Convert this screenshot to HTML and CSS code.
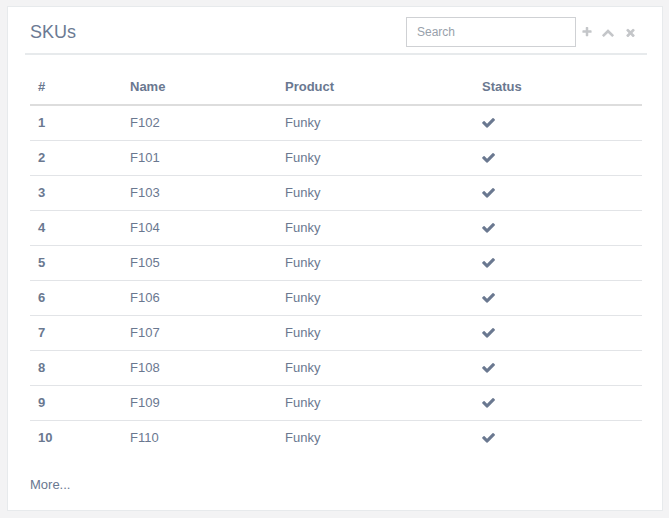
FILE: index.html
```html
<!DOCTYPE html>
<html>
<head>
<meta charset="utf-8">
<link rel="stylesheet" href="styles.css">
</head>
<body>
<div class="panel">
  <div class="panel-head">
    <h5 class="title">SKUs</h5>
    <div class="tools">
      <input class="search" type="text" placeholder="Search">
      <svg class="ic ic-plus" viewBox="128 128 1536 1536"><path d="M1600 736v192q0 40-28 68t-68 28h-416v416q0 40-28 68t-68 28h-192q-40 0-68-28t-28-68v-416h-416q-40 0-68-28t-28-68v-192q0-40 28-68t68-28h416v-416q0-40 28-68t68-28h192q40 0 68 28t28 68v416h416q40 0 68 28t28 68z"/></svg>
      <svg class="ic ic-up" viewBox="90 440 1612 1080"><path d="M1683 1331l-166 165q-19 19-45 19t-45-19l-531-531-531 531q-19 19-45 19t-45-19l-166-165q-19-19-19-45.5t19-45.5l742-741q19-19 45-19t45 19l742 741q19 19 19 45.5t-19 45.5z"/></svg>
      <svg class="ic ic-x" viewBox="290 270 1210 1270"><path d="M1490 1322q0 40-28 68l-136 136q-28 28-68 28t-68-28l-294-294-294 294q-28 28-68 28t-68-28l-136-136q-28-28-28-68t28-68l294-294-294-294q-28-28-28-68t28-68l136-136q28-28 68-28t68 28l294 294 294-294q28-28 68-28t68 28l136 136q28 28 28 68t-28 68l-294 294 294 294q28 28 28 68z"/></svg>
    </div>
  </div>
  <div class="panel-body">
    <table class="grid">
      <thead>
        <tr><th class="c1">#</th><th class="c2">Name</th><th class="c3">Product</th><th>Status</th></tr>
      </thead>
      <tbody>
        <tr><td class="num">1</td><td>F102</td><td>Funky</td><td><svg class="chk" viewBox="100 380 1580 1120"><path d="M1671 566q0 40-28 68l-724 724-136 136q-28 28-68 28t-68-28l-136-136-362-362q-28-28-28-68t28-68l136-136q28-28 68-28t68 28l294 295 656-657q28-28 68-28t68 28l136 136q28 28 28 68z"/></svg></td></tr>
        <tr><td class="num">2</td><td>F101</td><td>Funky</td><td><svg class="chk" viewBox="100 380 1580 1120"><path d="M1671 566q0 40-28 68l-724 724-136 136q-28 28-68 28t-68-28l-136-136-362-362q-28-28-28-68t28-68l136-136q28-28 68-28t68 28l294 295 656-657q28-28 68-28t68 28l136 136q28 28 28 68z"/></svg></td></tr>
        <tr><td class="num">3</td><td>F103</td><td>Funky</td><td><svg class="chk" viewBox="100 380 1580 1120"><path d="M1671 566q0 40-28 68l-724 724-136 136q-28 28-68 28t-68-28l-136-136-362-362q-28-28-28-68t28-68l136-136q28-28 68-28t68 28l294 295 656-657q28-28 68-28t68 28l136 136q28 28 28 68z"/></svg></td></tr>
        <tr><td class="num">4</td><td>F104</td><td>Funky</td><td><svg class="chk" viewBox="100 380 1580 1120"><path d="M1671 566q0 40-28 68l-724 724-136 136q-28 28-68 28t-68-28l-136-136-362-362q-28-28-28-68t28-68l136-136q28-28 68-28t68 28l294 295 656-657q28-28 68-28t68 28l136 136q28 28 28 68z"/></svg></td></tr>
        <tr><td class="num">5</td><td>F105</td><td>Funky</td><td><svg class="chk" viewBox="100 380 1580 1120"><path d="M1671 566q0 40-28 68l-724 724-136 136q-28 28-68 28t-68-28l-136-136-362-362q-28-28-28-68t28-68l136-136q28-28 68-28t68 28l294 295 656-657q28-28 68-28t68 28l136 136q28 28 28 68z"/></svg></td></tr>
        <tr><td class="num">6</td><td>F106</td><td>Funky</td><td><svg class="chk" viewBox="100 380 1580 1120"><path d="M1671 566q0 40-28 68l-724 724-136 136q-28 28-68 28t-68-28l-136-136-362-362q-28-28-28-68t28-68l136-136q28-28 68-28t68 28l294 295 656-657q28-28 68-28t68 28l136 136q28 28 28 68z"/></svg></td></tr>
        <tr><td class="num">7</td><td>F107</td><td>Funky</td><td><svg class="chk" viewBox="100 380 1580 1120"><path d="M1671 566q0 40-28 68l-724 724-136 136q-28 28-68 28t-68-28l-136-136-362-362q-28-28-28-68t28-68l136-136q28-28 68-28t68 28l294 295 656-657q28-28 68-28t68 28l136 136q28 28 28 68z"/></svg></td></tr>
        <tr><td class="num">8</td><td>F108</td><td>Funky</td><td><svg class="chk" viewBox="100 380 1580 1120"><path d="M1671 566q0 40-28 68l-724 724-136 136q-28 28-68 28t-68-28l-136-136-362-362q-28-28-28-68t28-68l136-136q28-28 68-28t68 28l294 295 656-657q28-28 68-28t68 28l136 136q28 28 28 68z"/></svg></td></tr>
        <tr><td class="num">9</td><td>F109</td><td>Funky</td><td><svg class="chk" viewBox="100 380 1580 1120"><path d="M1671 566q0 40-28 68l-724 724-136 136q-28 28-68 28t-68-28l-136-136-362-362q-28-28-28-68t28-68l136-136q28-28 68-28t68 28l294 295 656-657q28-28 68-28t68 28l136 136q28 28 28 68z"/></svg></td></tr>
        <tr><td class="num">10</td><td>F110</td><td>Funky</td><td><svg class="chk" viewBox="100 380 1580 1120"><path d="M1671 566q0 40-28 68l-724 724-136 136q-28 28-68 28t-68-28l-136-136-362-362q-28-28-28-68t28-68l136-136q28-28 68-28t68 28l294 295 656-657q28-28 68-28t68 28l136 136q28 28 28 68z"/></svg></td></tr>
      </tbody>
    </table>
    <a class="more">More...</a>
  </div>
</div>
</body>
</html>
```
FILE: styles.css
```css
html, body {
  margin: 0;
  padding: 0;
}
body {
  background: #f3f3f4;
  font-family: "Liberation Sans", Arial, sans-serif;
  font-size: 13px;
  color: #6a7890;
  padding: 6px 6px 7px 7px;
  height: 518px;
  box-sizing: border-box;
}
.panel {
  background: #fff;
  border: 1px solid #e7eaec;
  height: 505px;
  box-sizing: border-box;
}
.panel-head {
  margin: 0 15px 0 17px;
  padding: 10px 0 6px 5px;
  border-bottom: 2px solid #e7eaec;
  display: flex;
  align-items: center;
  justify-content: space-between;
}
.title {
  margin: 0;
  font-size: 18px;
  font-weight: normal;
  color: #6b7a93;
  line-height: 30px;
}
.tools {
  display: flex;
  align-items: center;
  padding-right: 12px;
}
.search {
  width: 170px;
  height: 30px;
  box-sizing: border-box;
  border: 1px solid #cfd1d4;
  padding: 0 10px;
  font-family: "Liberation Sans", Arial, sans-serif;
  font-size: 12px;
  color: #676a6c;
  outline: none;
  margin: 0;
}
.search::placeholder {
  color: #98a1ab;
}
.ic {
  fill: #c4c6c9;
  display: block;
}
.ic-plus {
  width: 10px;
  height: 10px;
  margin-left: 6px;
}
.ic-up {
  width: 12px;
  height: 8px;
  margin-left: 10px;
  margin-top: 1px;
}
.ic-x {
  width: 9px;
  height: 9px;
  margin-left: 12px;
  margin-top: 1px;
}
.panel-body {
  padding: 13px 20px 0 22px;
}
.grid {
  width: 612px;
  border-collapse: collapse;
  border-spacing: 0;
}
.grid th {
  text-align: left;
  font-weight: bold;
  padding: 10px 8px 8px;
  line-height: 18px;
  border-bottom: 2px solid #dddddd;
  color: #6a7890;
}
.grid th.c1 { width: 76px; }
.grid th.c2 { width: 139px; }
.grid th.c3 { width: 181px; }
.grid td {
  padding: 8px;
  line-height: 18px;
  border-top: 1px solid #e2e4e7;
  vertical-align: middle;
}
.grid tbody tr:first-child td {
  border-top: 0;
}
.grid td.num {
  font-weight: bold;
}
.chk {
  display: block;
  width: 13px;
  height: 10px;
  fill: #6a7890;
}
.more {
  display: block;
  margin-top: 21px;
  line-height: 18px;
  color: #6a7890;
  cursor: pointer;
}
```
